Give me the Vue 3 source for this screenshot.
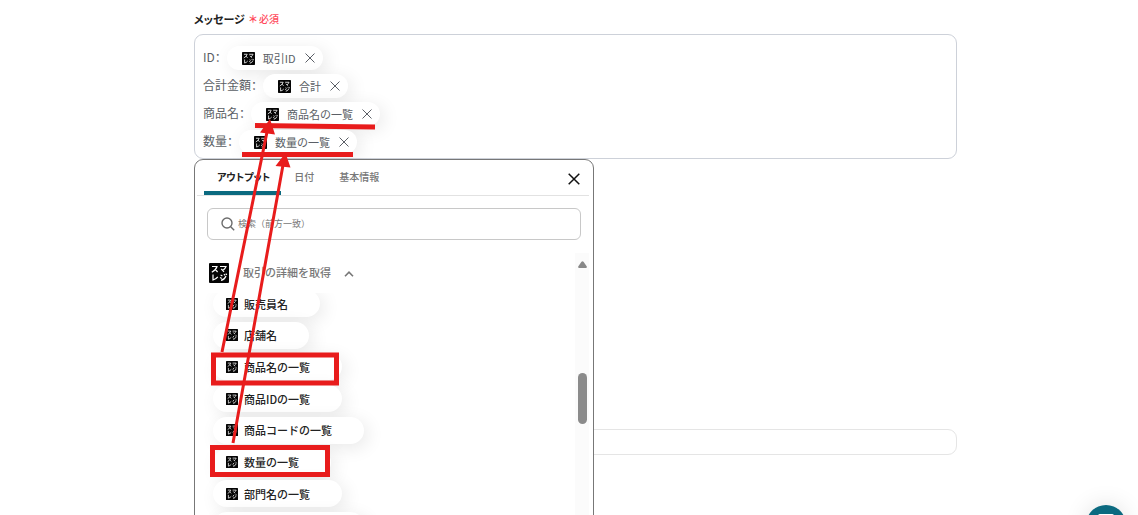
<script setup>
import { ref, h } from 'vue'

const SmaregiLogo = () =>
  h('svg', { viewBox: '0 0 20 20', 'aria-hidden': 'true' }, [
    h('rect', { width: 20, height: 20, rx: 1, fill: '#050505' }),
    h('path', {
      d: 'M3 3.5H8Q7 7 2.8 9.2M6 6.2L8.6 9M11 3.5H17Q16 6 13.8 7.6M12.2 5.8L15 8.8M4 11.5V17Q7 16.2 8.8 13.8M11.6 12L13.4 13M11 14.4L12.8 15.4M12 17.4Q15.6 16.6 17 13M15 11L16 12.4M16.8 10.6L17.8 12',
      fill: 'none',
      stroke: '#fff',
      'stroke-width': 1.2,
    }),
  ])

const lines = ref([
  { label: 'ID', value: '取引ID' },
  { label: '合計金額', value: '合計' },
  { label: '商品名', value: '商品名の一覧' },
  { label: '数量', value: '数量の一覧' },
])
const tabs = ['アウトプット', '日付', '基本情報']
const active = ref(0)
const query = ref('')
const outputs = [
  '販売員名',
  '店舗名',
  '商品名の一覧',
  '商品IDの一覧',
  '商品コードの一覧',
  '数量の一覧',
  '部門名の一覧',
]
</script>

<template>
  <main class="page">
    <h1 id="message-label" class="field-label">メッセージ<span class="required"><b>＊</b>必須</span></h1>
    <div class="message" role="group" aria-labelledby="message-label">
      <div v-for="line in lines" :key="line.label" class="line">
        <span class="line-label">{{ line.label }}<span class="colon">：</span></span>
        <span class="token">
          <SmaregiLogo class="token-logo" />
          {{ line.value }}
          <button type="button" class="remove" :aria-label="line.value + 'を削除'">
            <svg viewBox="0 0 10 10"><path d="M.5 .5L9.5 9.5M9.5 .5L.5 9.5" /></svg>
          </button>
        </span>
      </div>
    </div>

    <div class="lower">
      <section class="picker">
        <header class="tabs">
          <button
            v-for="(tab, i) in tabs"
            :key="tab"
            type="button"
            class="tab"
            :class="{ active: i === active }"
            @click="active = i"
          >{{ tab }}</button>
          <button type="button" class="close" aria-label="閉じる">
            <svg viewBox="0 0 12 12"><path d="M.7 .7L11.3 11.3M11.3 .7L.7 11.3" /></svg>
          </button>
        </header>
        <label class="search">
          <svg viewBox="0 0 14 14"><circle cx="6" cy="6" r="5" /><path d="M9.7 9.7L13.2 13.2" /></svg>
          <input v-model="query" type="text" aria-label="検索" placeholder="検索（前方一致）" />
        </label>
        <div class="results">
          <div class="group">
            <button type="button" class="group-head">
              <SmaregiLogo class="group-logo" />
              <span class="group-name">取引の詳細を取得</span>
              <svg class="chevron" viewBox="0 0 10 6"><path d="M1 5.2L5 1.2L9 5.2" /></svg>
            </button>
            <div class="clip">
              <div class="options">
                <button v-for="name in outputs" :key="name" type="button" class="option">
                  <SmaregiLogo class="option-logo" />{{ name }}
                </button>
                <span class="option next"></span>
              </div>
            </div>
          </div>
          <div class="track" aria-hidden="true">
            <svg viewBox="0 0 9 7"><path d="M3.5 .8Q4.5 -.4 5.5 .8L8.8 5.5Q9 7 8 7H1Q0 7 .2 5.5Z" /></svg>
            <div class="thumb"></div>
          </div>
        </div>
      </section>
      <input class="extra" type="text" aria-label="追加項目" />
    </div>

    <svg class="marks" width="400" height="515" viewBox="0 0 400 515" aria-hidden="true">
      <g fill="none" stroke="#e81c1c">
        <path stroke-width="5" d="M255 125.5L375 127M242 154.5H353" />
        <rect stroke-width="5" x="213.5" y="355" width="123" height="28" />
        <rect stroke-width="5" x="212.5" y="447.5" width="115" height="27" />
        <path stroke-width="3" d="M222 352L267 132M233 443L283 165" />
      </g>
      <path fill="#e81c1c" d="M270 119L260 132.5L275 134.5ZM285.5 153L275.5 166L290.5 167.5Z" />
    </svg>

    <button type="button" class="chat" aria-label="チャット"><span></span></button>
  </main>
</template>

<style>
body {
  overflow: hidden;
}
</style>

<style scoped>
.page {
  position: relative;
  box-sizing: border-box;
  height: 100vh;
  overflow: hidden;
  padding: 10px 181px 0 194px;
  background: #fff;
  color: #5b5f66;
  font: 11px/18px "Noto Sans CJK JP", sans-serif;
}
button,
input {
  box-sizing: border-box;
  margin: 0;
  padding: 0;
  border: 0;
  background: none;
  color: inherit;
  font: inherit;
}
svg {
  display: block;
  flex: none;
}
.field-label {
  display: flex;
  margin: 0 0 6px;
  color: #222;
  font-size: 11px;
  font-weight: 700;
  font-feature-settings: "palt";
}
.required {
  margin-left: 4px;
  color: #ff4b5c;
  font-size: 10px;
  font-weight: 500;
}
.required b {
  margin-right: 2px;
}
.message {
  box-sizing: border-box;
  height: 125px;
  padding: 9px 8px;
  border: 1px solid #cdd1d9;
  border-radius: 9px;
}
.line {
  display: flex;
  align-items: center;
  height: 28px;
}
.line-label {
  position: relative;
  z-index: 1;
  padding-bottom: 2px;
  font-size: 12px;
}
.colon {
  font-family: "Noto Sans CJK SC", sans-serif;
}
.token {
  display: flex;
  align-items: center;
  gap: 8px;
  height: 24px;
  padding: 0 8px 0 15px;
  border-radius: 12px;
  background: #fff;
  box-shadow: 4px 4px 18px rgba(0, 0, 0, 0.09);
}
.token-logo {
  width: 13px;
  height: 13px;
}
.remove {
  margin-left: 1px;
}
.remove svg {
  width: 10px;
  height: 10px;
  fill: none;
  stroke: #5b5f66;
}
.lower {
  display: flow-root;
  position: relative;
}
.picker {
  position: absolute;
  z-index: 1;
  top: 0;
  left: 0;
  box-sizing: border-box;
  width: 400px;
  height: 380px;
  border: 1px solid #777;
  border-radius: 9px;
  background: #fff;
}
.tabs {
  display: flex;
  align-items: stretch;
  height: 35px;
  margin: 0 4px 0 2px;
  padding: 0 7px;
  border-bottom: 1px solid #e2e2e2;
}
.tab {
  padding: 2px 12px 0 13px;
  border-bottom: 4px solid transparent;
  color: #777;
  font-size: 10px;
  font-weight: 500;
  font-feature-settings: "palt";
}
.tab.active {
  padding-right: 11px;
  border-bottom-color: #0b6a80;
  border-radius: 4px 0 0 0;
  color: #222;
  font-weight: 700;
}
.close {
  margin: 3px 2px 0 auto;
}
.close svg {
  width: 12px;
  height: 12px;
  fill: none;
  stroke: #111;
  stroke-width: 1.5;
}
.search {
  display: flex;
  align-items: center;
  gap: 3px;
  box-sizing: border-box;
  height: 32px;
  margin: 12px 12px 0;
  padding: 0 13px;
  border: 1px solid #c8c8c8;
  border-radius: 6px;
}
.search svg {
  width: 14px;
  height: 14px;
  fill: none;
  stroke: #6c6c6c;
  stroke-width: 1.4;
}
.search input {
  flex: 1;
  outline: 0;
  font-size: 9px;
}
.search input::placeholder {
  color: #777;
  opacity: 1;
}
.results {
  display: flex;
  height: 266px;
  margin: 13px 4px 0 0;
}
.group {
  flex: 1;
}
.group-head {
  display: flex;
  align-items: center;
  height: 40px;
  padding-left: 14px;
  color: #777;
  font-weight: 500;
}
.group-logo {
  width: 20px;
  height: 20px;
  margin-right: 14px;
}
.group-name {
  padding-bottom: 2px;
}
.chevron {
  width: 10px;
  height: 6px;
  margin: 2px 0 0 13px;
  fill: none;
  stroke: #777;
  stroke-width: 1.6;
}
.clip {
  height: 226px;
  overflow: hidden;
}
.options {
  display: flex;
  flex-direction: column;
  align-items: flex-start;
  justify-content: space-between;
  height: 249px;
  margin: -3px 0 0 18px;
}
.option {
  display: flex;
  align-items: center;
  gap: 6px;
  box-sizing: border-box;
  height: 27px;
  padding: 0 32px 0 13px;
  border-radius: 14px;
  background: #fff;
  box-shadow: 4px 4px 18px rgba(0, 0, 0, 0.09);
  color: #222;
  font-weight: 500;
}
.option.next {
  width: 151px;
}
.option-logo {
  width: 12px;
  height: 12px;
}
.track {
  width: 14px;
  background: #fbfbfb;
}
.track svg {
  width: 9px;
  height: 7px;
  margin: 8px auto 0 3px;
  fill: #888;
}
.thumb {
  width: 9px;
  height: 51px;
  margin: 105px 0 0 3px;
  border-radius: 5px;
  background: #8b8b8b;
}
.extra {
  display: block;
  width: 100%;
  height: 26px;
  margin-top: 270px;
  border: 1px solid #e5e5e5;
  border-radius: 9px;
}
.marks {
  position: absolute;
  z-index: 2;
  top: 0;
  left: 0;
  pointer-events: none;
}
.chat {
  position: absolute;
  right: 12px;
  bottom: -30px;
  width: 40px;
  height: 40px;
  border-radius: 50%;
  background: #0b6a80;
  box-shadow: 0 0 24px rgba(0, 0, 0, 0.12);
}
.chat span {
  display: block;
  width: 16px;
  height: 22px;
  margin: 0 auto;
  border-radius: 2px;
  background: #fff;
}
</style>
